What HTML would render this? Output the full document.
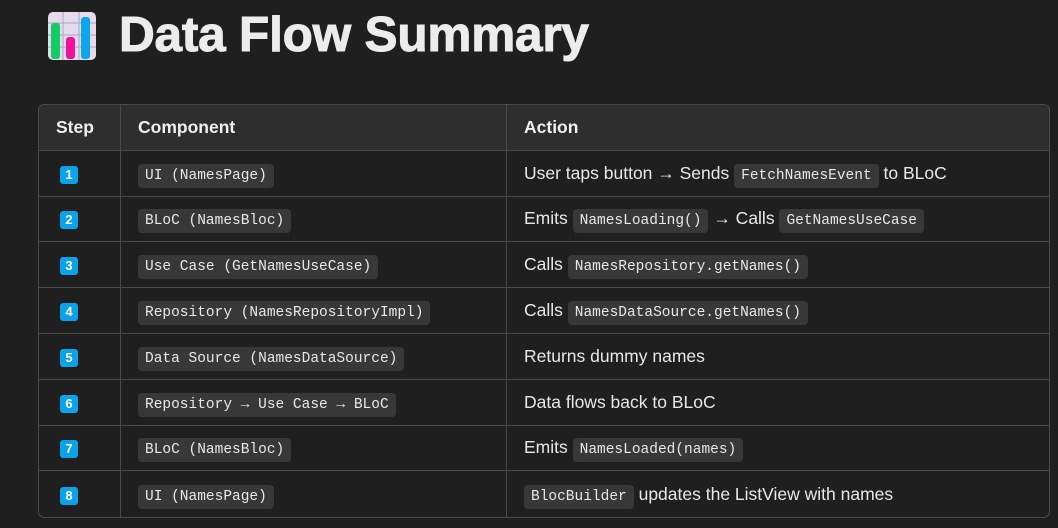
<!DOCTYPE html>
<html><head><meta charset="utf-8"><style>
body{margin:0;background:#1f1f1f;width:1058px;height:528px;overflow:hidden;font-family:"Liberation Sans",sans-serif;color:#e8e8e8}
.title{position:absolute;left:119px;top:6px;font-size:49.5px;font-weight:bold;color:#ececec;letter-spacing:-0.2px;-webkit-text-stroke:1px #ececec}
.icon{position:absolute;left:47px;top:11px;width:50px;height:50px}
table{position:absolute;left:38px;top:104px;width:1012px;border-collapse:separate;border-spacing:0;border:1px solid #4a4a4a;border-radius:6px;overflow:hidden;table-layout:fixed}
td,th{height:45.8px;box-sizing:border-box;border-right:1px solid #4a4a4a;border-bottom:1px solid #4a4a4a;padding:0 0 0 17px;text-align:left;font-size:17.5px;white-space:nowrap}
tr td:last-child,tr th:last-child{border-right:none}
tr:last-child td{border-bottom:none}
th{background:#2e2e2e;font-weight:bold;color:#f0f0f0}
th:first-child{width:82px}
th:nth-child(2){width:386px}
code{font-family:"Liberation Mono",monospace;font-size:14.5px;background:#383838;border-radius:4px;padding:4px 7px;color:#e8e8e8}
.b{display:inline-block;width:18px;height:18px;background:#0aa2e8;border-radius:3px;color:#fff;font-weight:bold;font-size:13px;text-align:center;line-height:18px;margin-left:4px}
</style></head><body>
<svg class="icon" viewBox="0 0 50 50"><rect x="1" y="1" width="48" height="48" rx="5" fill="#e4dced"/><path d="M1 12H49M1 24H49M1 36H49M16 1V49M32 1V49" stroke="#b8aec6" stroke-width="1.2"/><rect x="4" y="12" width="9" height="36" rx="3" fill="#12cc66"/><rect x="19" y="26" width="9" height="22" rx="3" fill="#f0129a"/><rect x="34" y="6" width="9" height="42" rx="3" fill="#0aa6ee"/></svg>
<div class="title">Data Flow Summary</div>
<table>
<tr><th>Step</th><th>Component</th><th>Action</th></tr>
<tr><td><span class="b">1</span></td><td><code>UI (NamesPage)</code></td><td>User taps button → Sends <code>FetchNamesEvent</code> to BLoC</td></tr>
<tr><td><span class="b">2</span></td><td><code>BLoC (NamesBloc)</code></td><td>Emits <code>NamesLoading()</code> → Calls <code>GetNamesUseCase</code></td></tr>
<tr><td><span class="b">3</span></td><td><code>Use Case (GetNamesUseCase)</code></td><td>Calls <code>NamesRepository.getNames()</code></td></tr>
<tr><td><span class="b">4</span></td><td><code>Repository (NamesRepositoryImpl)</code></td><td>Calls <code>NamesDataSource.getNames()</code></td></tr>
<tr><td><span class="b">5</span></td><td><code>Data Source (NamesDataSource)</code></td><td>Returns dummy names</td></tr>
<tr><td><span class="b">6</span></td><td><code>Repository → Use Case → BLoC</code></td><td>Data flows back to BLoC</td></tr>
<tr><td><span class="b">7</span></td><td><code>BLoC (NamesBloc)</code></td><td>Emits <code>NamesLoaded(names)</code></td></tr>
<tr><td><span class="b">8</span></td><td><code>UI (NamesPage)</code></td><td><code>BlocBuilder</code> updates the ListView with names</td></tr>
</table>
</body></html>
